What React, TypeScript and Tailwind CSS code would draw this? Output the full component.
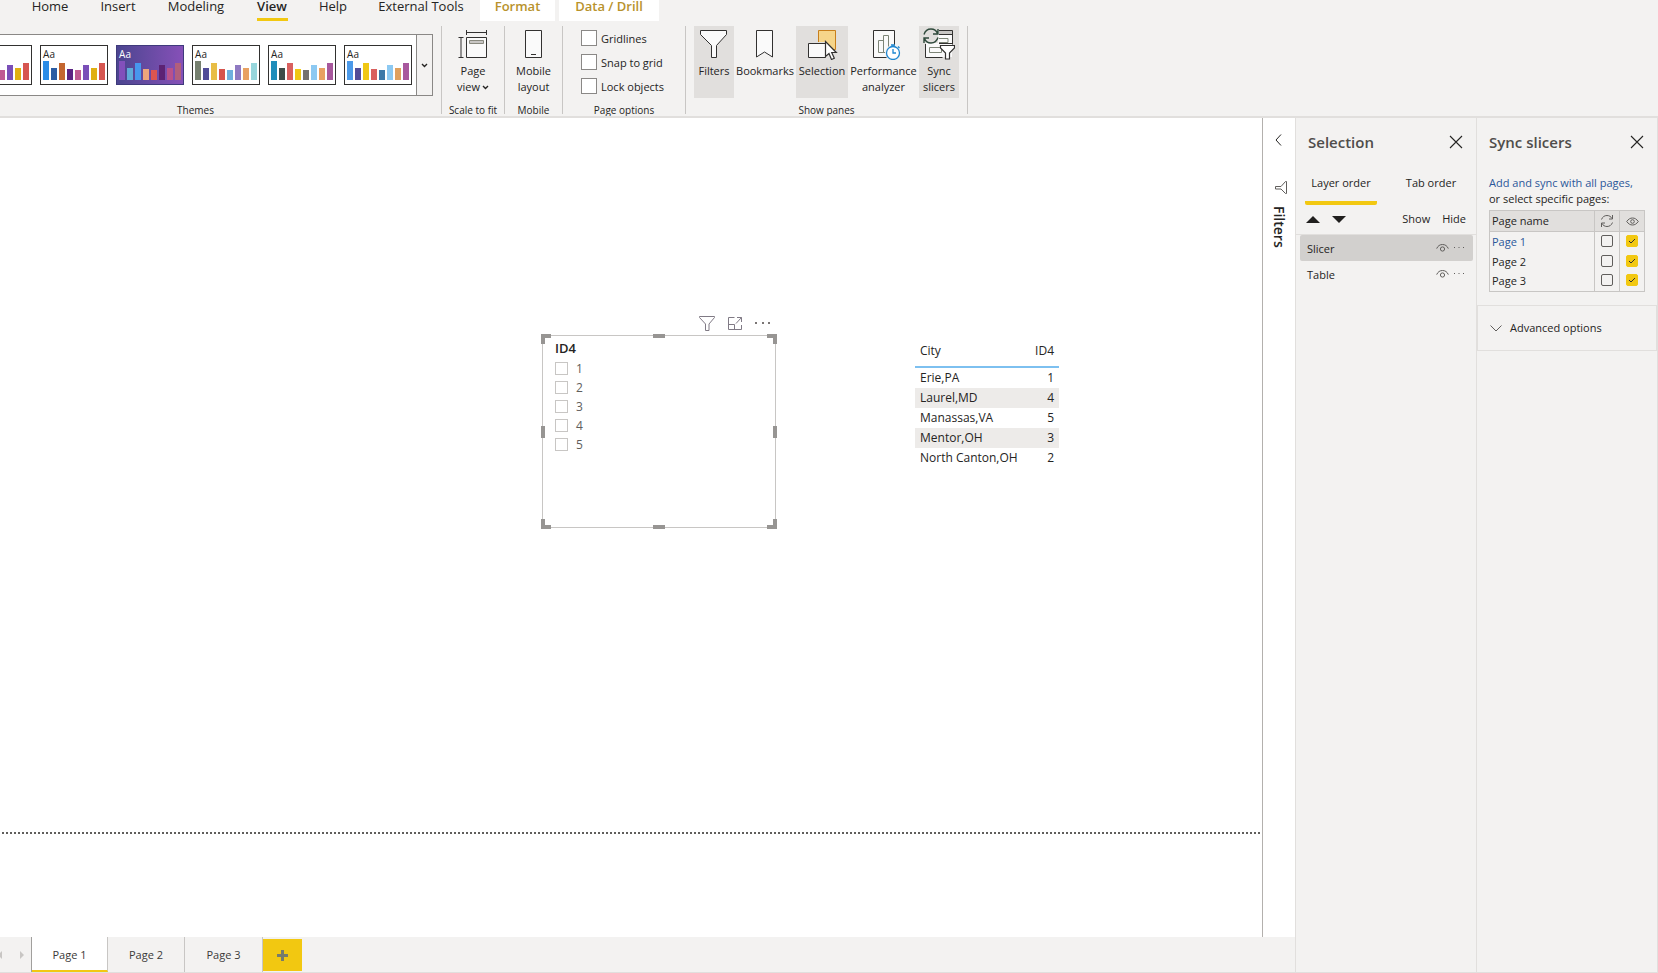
import { useState } from "react";
import type { ReactNode } from "react";
import clsx from "clsx";

const tabs = [
  { name: "Home", size: "w-[68px]" },
  { name: "Insert", size: "w-[68px]" },
  { name: "Modeling", size: "w-[88px]" },
  { name: "View", size: "w-16", active: true },
  { name: "Help", size: "w-[58px]" },
  { name: "External Tools", size: "w-[118px]" },
];

const themes = [
  { id: "t1", colors: ["#2b8ce6", "#2b5ca3", "#c4662f", "#5c2483", "#bf5a92", "#7a4fb8", "#e0b012", "#d65650"] },
  { id: "t2", colors: ["#2b8ce6", "#2b5ca3", "#c4662f", "#5c2483", "#bf5a92", "#7a4fb8", "#e0b012", "#d65650"] },
  { id: "t3", dark: true, colors: ["#8250bb", "#5fabd9", "#4797ee", "#eda57c", "#dc5550", "#5c2274", "#b9518a", "#b15f7c"] },
  { id: "t4", colors: ["#76806f", "#514c98", "#e8bd45", "#d6544d", "#6fb0de", "#8f7ac2", "#e8a162", "#97d6dc"] },
  { id: "t5", colors: ["#1f8dba", "#3e4c48", "#d9605f", "#f0c713", "#757170", "#8cc9f2", "#e8a162", "#a8589d"] },
  { id: "t6", colors: ["#4b9aea", "#514c98", "#f0c713", "#d9605f", "#3c78a8", "#8cc9f2", "#dfa05e", "#a8589d"] },
];

const barHeights = [19, 12, 17, 11, 10, 15, 12, 17];

const cities = [
  { city: "Erie,PA", id: 1 },
  { city: "Laurel,MD", id: 4 },
  { city: "Manassas,VA", id: 5 },
  { city: "Mentor,OH", id: 3 },
  { city: "North Canton,OH", id: 2 },
];

/* ---------- icons ---------- */

const CloseIcon = () => (
  <svg width="14" height="14" viewBox="0 0 14 14" fill="none" stroke="#252423" strokeWidth="1.1">
    <path d="M1 1l12 12M13 1L1 13" />
  </svg>
);

const EyeIcon = () => (
  <svg width="13" height="10" viewBox="0 0 13 10" fill="none" stroke="#605e5c">
    <path d="M.7 5.6C1.8 2.8 4 1.5 6.5 1.5s4.700 1.300 5.800 4.100" />
    <circle cx="6.500" cy="6" r="2.100" />
  </svg>
);

const DotsIcon = () => (
  <svg width="12" height="4" viewBox="0 0 12 4" fill="#605e5c">
    <path d="M1 1h1v1H1zM5.500 1h1v1h-1zM10 1h1v1h-1z" />
  </svg>
);

const Chevron = () => (
  <svg width="7" height="5" viewBox="0 0 7 5" fill="none" stroke="#252423" strokeWidth="1.4">
    <path d="M1 1l2.500 2.500L6 1" />
  </svg>
);

const PageViewIcon = () => (
  <svg width="30" height="28" viewBox="0 0 30 28" fill="none" stroke="#323130">
    <path d="M8.500 0v5M28.500 0v5M8.500 2.500h20M.5 7.500h5M.5 27.500h5M3 7.500v20" />
    <path d="M8.500 7.500h20v20h-20z" fill="#fafafa" />
    <path d="M11.500 10.500h14v3h-14z" fill="#c8c6c4" stroke="#8a8a80" />
  </svg>
);

const MobileIcon = () => (
  <svg width="18" height="28" viewBox="0 0 18 28" fill="none" stroke="#323130">
    <path d="M.5.5h16v27H.5z" fill="#fafafa" />
    <path d="M6 24.500h5" />
  </svg>
);

const FilterIcon = () => (
  <svg width="28" height="28" viewBox="0 0 28 28" fill="#fafafa" stroke="#323130">
    <path d="M.5.5h26v4L16.500 15.500v12h-5v-12L.5 4.500z" />
  </svg>
);

const BookmarkIcon = () => (
  <svg width="18" height="28" viewBox="0 0 18 28" fill="#fafafa" stroke="#323130">
    <path d="M.5.5h16v26.500l-8-5-8 5z" />
  </svg>
);

const SelectionIcon = () => (
  <svg width="32" height="30" viewBox="-2 0 32 30">
    <path d="M10.500.5h17v19h-17z" fill="#f6d58a" stroke="#c87f1c" />
    <path d="M0 12h18v16H0z" fill="#e1dfdd" />
    <path d="M.5 13.500h17v14H.5z" fill="#fafafa" stroke="#323130" />
    <path d="M17.500 11.500v15l3.500-3 2.500 6 2.800-1.200-2.600-5.800h4.600z" fill="#fff" stroke="#323130" strokeWidth="1.2" />
  </svg>
);

const PerformanceIcon = () => (
  <svg width="34" height="30" viewBox="-6 0 34 30" fill="none">
    <path d="M.5.5h21v27H.5z" fill="#fafafa" stroke="#323130" />
    <path d="M5.500 10.500h5v12h-5zM10.500 5.500h5v17h-5z" stroke="#7d8577" />
    <circle cx="20" cy="23" r="8" fill="#f3f2f1" />
    <circle cx="20" cy="23" r="6.500" fill="#fff" stroke="#1e86d0" strokeWidth="1.300" />
    <path d="M20 19v4h3M18 15h4M20 15v2M25 16.500l1.500 1.500" stroke="#1e86d0" strokeWidth="1.300" />
  </svg>
);

const SyncIcon = () => (
  <svg className="-mt-0.5" width="32" height="32" viewBox="0 0 32 32" fill="none">
    <path d="M3 15h26v14H3zM15 3h14v12H15z" fill="#fafafa" />
    <path d="M16 3h13v3H16z" fill="#c8c6c4" />
    <path d="M16 2.500h13.500v14M16 6.500h13M2.500 16v13.500h17M16 15.500h13" stroke="#323130" />
    <path d="M16 10.500h9v4h-9M6.500 19.500h12v5h-12z" stroke="#7d8577" />
    <path
      d="M1 6.500C2.200 2.800 4.700 1 8 1c3.200 0 5.500 1.800 6.500 4.500M15 1v5h-5M15 9.500c-1.200 3.700-3.700 5.500-7 5.500-3.200 0-5.500-1.800-6.500-4.500M1 15v-5h5"
      stroke="#2f4a3c"
      strokeWidth="1.400"
    />
    <path d="M17.500 17.500h14v2.500l-5 5v6h-4v-6l-5-5z" fill="#fff" stroke="#323130" strokeWidth="1.200" />
  </svg>
);

const RefreshIcon = () => (
  <svg width="14" height="14" viewBox="0 0 14 14" fill="none" stroke="#605e5c">
    <path d="M1.500 5.500C2.500 2.800 4.500 1.500 7 1.500c2.300 0 4 1.200 5 3M12.500 1v4H9M12.500 8.500c-1 2.700-3 4-5.500 4-2.300 0-4-1.200-5-3M1.500 13V9H5" />
  </svg>
);

/* ---------- small parts ---------- */

const Group = ({ label, className, children }: { label: string; className?: string; children: ReactNode }) => (
  <section className={clsx("flex h-[88px] shrink-0 flex-col border-r border-[#c8c6c4]", className)}>
    <div className="flex flex-1">{children}</div>
    <div className="h-2.5 text-center text-[10px] leading-3">{label}</div>
  </section>
);

const RibbonButton = ({ icon, size, active, children }: { icon: ReactNode; size: string; active?: boolean; children: ReactNode }) => (
  <button
    className={clsx(
      "flex h-[72px] shrink-0 flex-col items-center whitespace-nowrap pt-1 text-[11px] leading-4",
      size,
      active && "bg-[#e1dfdd]"
    )}
  >
    <span className="flex h-[33px] items-start">{icon}</span>
    {children}
  </button>
);

const Theme = ({ colors, dark }: { colors: string[]; dark?: boolean }) => (
  <button
    aria-label="Theme"
    className={clsx(
      "flex h-10 w-[68px] shrink-0 flex-col items-start justify-between border px-0.5 pb-1 pt-0.5",
      dark ? "border-[#3f3a7c] bg-linear-to-r from-[#4b4590] to-[#8650b8] text-white" : "border-[#323130] bg-white"
    )}
  >
    <span className="text-[10px] leading-3 tracking-wide">Aa</span>
    <span className="flex items-end gap-0.5">
      {colors.map((color, i) => (
        <span key={i} className="w-1.5" style={{ height: barHeights[i], background: color }} />
      ))}
    </span>
  </button>
);

const PageCheck = ({ label, defaultChecked }: { label: string; defaultChecked?: boolean }) => (
  <span className="relative mx-auto mb-0.5 block size-3">
    <input
      type="checkbox"
      aria-label={label}
      defaultChecked={defaultChecked}
      className="peer block size-3 appearance-none rounded-xs border border-[#605e5c] checked:border-[#f2c811] checked:bg-[#f2c811]"
    />
    <svg
      className="pointer-events-none absolute inset-0 hidden peer-checked:block"
      viewBox="0 0 12 12"
      fill="none"
      stroke="#323130"
    >
      <path d="M3 6l2 2 4-4" />
    </svg>
  </span>
);

/* ---------- ribbon ---------- */

const Ribbon = () => (
  <header className="overflow-hidden border-b-2 border-[#e1dfdd]">
    <nav className="flex h-[21px] pl-4 text-[13px] leading-[13px]">
      {tabs.map((tab) => (
        <button key={tab.name} className={clsx("relative flex shrink-0 justify-center", tab.size, tab.active && "font-semibold")}>
          {tab.name}
          {tab.active && <span className="absolute bottom-0 h-[3px] w-[31px] bg-[#f2c811]" />}
        </button>
      ))}
      <button className="flex w-[75px] shrink-0 justify-center bg-white font-semibold text-[#b8922c]">Format</button>
      <button className="ml-1 flex w-[100px] shrink-0 justify-center bg-white font-semibold text-[#b8922c]">Data / Drill</button>
    </nav>

    <div className="flex pb-0.5 pt-[5px]">
      {/* Themes */}
      <Group label="Themes" className="w-[442px] pr-[50px]">
        <div className="mt-2 flex h-[62px] w-[433px] shrink-0 border border-l-0 border-[#8a8886] bg-white">
          <div className="flex flex-1 items-center justify-end gap-2 overflow-hidden pr-1">
            {themes.map((t) => (
              <Theme key={t.id} colors={t.colors} dark={t.dark} />
            ))}
          </div>
          <button aria-label="More themes" className="flex w-4 items-center justify-center border-l border-[#8a8886] bg-[#f3f2f1]">
            <Chevron />
          </button>
        </div>
      </Group>

      <Group label="Scale to fit" className="w-[63px]">
        <RibbonButton size="w-full" icon={<PageViewIcon />}>
          <span>Page</span>
          <span className="flex items-center gap-0.5">
            view <Chevron />
          </span>
        </RibbonButton>
      </Group>

      <Group label="Mobile" className="w-[58px]">
        <RibbonButton size="w-full" icon={<MobileIcon />}>
          <span>Mobile</span>
          <span>layout</span>
        </RibbonButton>
      </Group>

      <Group label="Page options" className="w-[123px]">
        <div className="flex flex-col gap-2 pl-[18px] pt-1">
          {["Gridlines", "Snap to grid", "Lock objects"].map((option) => (
            <label key={option} className="flex h-4 items-center gap-1 text-[11px] leading-4">
              <input type="checkbox" className="size-4 appearance-none border border-[#8a8886] bg-white checked:bg-[#f2c811]" />
              <span className="pt-0.5">{option}</span>
            </label>
          ))}
        </div>
      </Group>

      <Group label="Show panes" className="w-[282px]">
        <div className="flex pl-2">
          <RibbonButton size="w-10" active icon={<FilterIcon />}>Filters</RibbonButton>
          <RibbonButton size="w-[62px]" icon={<BookmarkIcon />}>Bookmarks</RibbonButton>
          <RibbonButton size="w-[52px]" active icon={<SelectionIcon />}>Selection</RibbonButton>
          <RibbonButton size="w-[71px]" icon={<PerformanceIcon />}>
            <span>Performance</span>
            <span>analyzer</span>
          </RibbonButton>
          <RibbonButton size="w-10" active icon={<SyncIcon />}>
            <span>Sync</span>
            <span>slicers</span>
          </RibbonButton>
        </div>
      </Group>
    </div>
  </header>
);

/* ---------- canvas visuals ---------- */

const Slicer = () => (
  <div className="absolute left-[542px] top-[217px] h-[193px] w-[234px] border border-[#c8c6c4] pl-3 pt-1">
    {/* visual header */}
    <div className="absolute -top-5 right-0 flex items-center gap-3 pr-1">
      <button aria-label="Filters on visual">
        <svg width="17" height="15" viewBox="0 0 17 15" fill="none" stroke="#807a85">
          <path d="M.5.500h15v1L10 8v6.500H6.500V8L.5 1.500z" />
        </svg>
      </button>
      <button aria-label="Focus mode">
        <svg width="15" height="13" viewBox="0 0 15 13" fill="none" stroke="#807a85">
          <path d="M6.500.5h-6v12h13V8M.5 7.500h6v5M9 .5h4.500V5M13.500.5L8 6.500" />
        </svg>
      </button>
      <button aria-label="More options">
        <svg width="16" height="3" viewBox="0 0 16 3" fill="#7a7574">
          <path d="M0 0h2v2H0zM7 0h2v2H7zM13 0h2v2h-2z" />
        </svg>
      </button>
    </div>

    {/* resize handles */}
    <span className="absolute -left-0.5 -top-0.5 size-2.5 border-l-4 border-t-4 border-[#979593]" />
    <span className="absolute -right-0.5 -top-0.5 size-2.5 border-r-4 border-t-4 border-[#979593]" />
    <span className="absolute -bottom-0.5 -left-0.5 size-2.5 border-b-4 border-l-4 border-[#979593]" />
    <span className="absolute -bottom-0.5 -right-0.5 size-2.5 border-b-4 border-r-4 border-[#979593]" />
    <span className="absolute -top-0.5 left-[110px] h-1 w-3 bg-[#979593]" />
    <span className="absolute -bottom-0.5 left-[110px] h-1 w-3 bg-[#979593]" />
    <span className="absolute -left-0.5 top-[90px] h-3 w-1 bg-[#979593]" />
    <span className="absolute -right-0.5 top-[90px] h-3 w-1 bg-[#979593]" />

    <h3 className="pb-[3px] text-[13px] font-semibold leading-4">ID4</h3>
    {[1, 2, 3, 4, 5].map((n) => (
      <label key={n} className="flex h-[19px] items-center gap-2 text-[12px] text-[#605e5c]">
        <input type="checkbox" className="size-[13px] appearance-none border border-[#c8c6c4] bg-white checked:bg-[#605e5c]" />
        {n}
      </label>
    ))}
  </div>
);

const CityTable = () => (
  <table className="absolute left-[915px] top-[215px] w-36 text-[12px] leading-5">
    <thead>
      <tr className="h-[34px] border-b-2 border-[#7dc0f0]">
        <th className="px-[5px] pt-0.5 text-left font-normal">City</th>
        <th className="px-[5px] pt-0.5 text-right font-normal">ID4</th>
      </tr>
    </thead>
    <tbody>
      {cities.map((row) => (
        <tr key={row.city} className="h-5 even:bg-[#edebe9]">
          <td className="whitespace-nowrap px-[5px]">{row.city}</td>
          <td className="px-[5px] text-right">{row.id}</td>
        </tr>
      ))}
    </tbody>
  </table>
);

const FiltersRail = () => (
  <aside className="flex w-8 shrink-0 flex-col items-center bg-white pt-4">
    <button aria-label="Expand filters" className="mr-0.5">
      <svg width="7" height="12" viewBox="0 0 7 12" fill="none" stroke="#252423">
        <path d="M6 .500L1 6l5 5.500" />
      </svg>
    </button>
    <svg className="ml-1 mt-[35px]" width="12" height="13" viewBox="0 0 12 13" fill="none" stroke="#605e5c">
      <path d="M11.500.5v12h-1L6 8H.5V5.500H6L10.500.5z" />
    </svg>
    <h2 className="mt-3 text-[14px] font-semibold leading-4 [writing-mode:vertical-rl]">Filters</h2>
  </aside>
);

/* ---------- side panes ---------- */

const PaneTitle = ({ title }: { title: string }) => (
  <div className="flex h-12 items-center justify-between pl-3 pr-[13px]">
    <h2 className="text-[15px] font-semibold text-[#4f4d4b]">{title}</h2>
    <button aria-label={"Close " + title}>
      <CloseIcon />
    </button>
  </div>
);

const SelectionPane = () => {
  const [selected, setSelected] = useState("Slicer");

  return (
    <aside className="flex w-[181px] shrink-0 flex-col border-l border-[#e1dfdd]">
      <PaneTitle title="Selection" />
      <div className="mt-0.5 flex text-[11px]">
        <button className="ml-[9px] h-[37px] w-[72px] whitespace-nowrap rounded-b-xs border-b-4 border-[#f2c811] pb-0.5 font-medium">Layer order</button>
        <button className="ml-[18px] h-[37px] w-[72px] whitespace-nowrap pb-1.5">Tab order</button>
      </div>
      <div className="flex h-[30px] items-center border-b border-[#e1dfdd] px-2.5 text-[11px]">
        <button aria-label="Move up">
          <svg width="14" height="7" viewBox="0 0 14 7" fill="#201f1e">
            <path d="M0 7l7-7 7 7z" />
          </svg>
        </button>
        <button aria-label="Move down" className="ml-3">
          <svg width="14" height="7" viewBox="0 0 14 7" fill="#201f1e">
            <path d="M0 0l7 7 7-7z" />
          </svg>
        </button>
        <button className="ml-auto">Show</button>
        <button className="ml-3">Hide</button>
      </div>
      <ul className="pl-1 pr-[3px]">
        {["Slicer", "Table"].map((item) => (
          <li
            key={item}
            onClick={() => setSelected(item)}
            className={clsx(
              "flex h-[26px] items-center rounded-xs pl-[7px] pr-2 text-[11px] leading-4",
              selected === item && "bg-[#d2d0ce]"
            )}
          >
            <span className="pt-0.5">{item}</span>
            <button aria-label={"Hide " + item} className="ml-auto">
              <EyeIcon />
            </button>
            <button aria-label={"More options for " + item} className="ml-1">
              <DotsIcon />
            </button>
          </li>
        ))}
      </ul>
    </aside>
  );
};

const SyncPane = () => (
  <aside className="flex w-[182px] shrink-0 flex-col border-x border-[#e1dfdd]">
    <PaneTitle title="Sync slicers" />
    <p className="whitespace-nowrap pl-3 pt-[9px] text-[11px] leading-4">
      <a href="#" className="text-[#2b579a]">Add and sync with all pages,</a>
      <br />
      or select specific pages:
    </p>
    <table className="ml-3 mt-[3px] w-[156px] table-fixed border border-[#c8c6c4] text-[11px] leading-4">
      <thead>
        <tr className="h-[21px] border-b border-[#c8c6c4] bg-[#e1dfdd]">
          <th className="pl-0.5 text-left font-normal">Page name</th>
          <th className="w-[25px] border-l border-[#c8c6c4]">
            <span className="flex justify-center"><RefreshIcon /></span>
          </th>
          <th className="w-[25px] border-l border-[#c8c6c4]">
            <span className="flex justify-center">
              <svg width="13" height="9" viewBox="0 0 13 9" fill="none" stroke="#605e5c">
                <path d="M.7 4.500C2.500 2 4.300 1 6.500 1s4 1 5.800 3.500C10.500 7 8.700 8 6.500 8S2.500 7 .7 4.500z" />
                <circle cx="6.500" cy="4.500" r="1.800" />
              </svg>
            </span>
          </th>
        </tr>
      </thead>
      <tbody>
        {["Page 1", "Page 2", "Page 3"].map((page, i) => (
          <tr key={page} className="h-5">
            <td className={clsx("pl-0.5", i === 0 && "text-[#2b579a]")}>{page}</td>
            <td className="border-l border-[#c8c6c4]"><PageCheck label={"Sync " + page} /></td>
            <td className="border-l border-[#c8c6c4]"><PageCheck label={"Show on " + page} defaultChecked /></td>
          </tr>
        ))}
      </tbody>
    </table>
    <button className="mt-[13px] flex h-[46px] items-center gap-2 border border-[#e1dfdd] pl-3 text-[11px]">
      <svg width="12" height="7" viewBox="0 0 12 7" fill="none" stroke="#605e5c">
        <path d="M.5.5L6 6 11.500.5" />
      </svg>
      Advanced options
    </button>
  </aside>
);

/* ---------- page tabs ---------- */

const PageTabs = () => (
  <nav className="flex h-[35px] shrink-0 text-[11px] text-[#3b3a39]">
    <div className="flex w-8 items-center justify-between border-r border-[#a19f9d] pr-[7px]">
      <svg width="2" height="8" viewBox="0 0 2 8" fill="#c8c6c4">
        <path d="M0 2l2-2v8L0 6z" />
      </svg>
      <svg width="4" height="8" viewBox="0 0 4 8" fill="#c8c6c4">
        <path d="M0 0l4 4-4 4z" />
      </svg>
    </div>
    <button className="w-[76px] border-b-2 border-r border-b-[#f2c811] border-r-[#c8c6c4] bg-white pt-[3px]">Page 1</button>
    <button className="w-[77px] border-r border-[#c8c6c4] pt-px">Page 2</button>
    <button className="w-[78px] border-r border-[#c8c6c4] pt-px">Page 3</button>
    <button aria-label="New page" className="mt-0.5 flex h-8 w-[39px] items-center justify-center bg-[#f2c811]">
      <svg width="11" height="11" viewBox="0 0 11 11" fill="#767b6c">
        <path d="M4 0h3v4h4v3H7v4H4V7H0V4h4z" />
      </svg>
    </button>
  </nav>
);

const App = () => {
  return (
    <div className="flex min-h-screen flex-col border-b border-[#e1dfdd] bg-[#f3f2f1] font-['Open_Sans',sans-serif] text-[#252423]">
      <Ribbon />
      <div className="flex flex-1">
        <div className="flex min-w-0 flex-1 flex-col">
          <div className="flex flex-1">
            <main className="relative flex min-w-0 flex-1 flex-col justify-end overflow-hidden border-r border-[#b3b0ad] bg-white">
              <Slicer />
              <CityTable />
              {/* page boundary */}
              <div className="mx-0.5 mb-[103px] h-0.5 bg-[repeating-linear-gradient(90deg,#605e5c_0_2px,transparent_2px_4px)]" />
            </main>
            <FiltersRail />
          </div>
          <PageTabs />
        </div>
        <SelectionPane />
        <SyncPane />
      </div>
    </div>
  );
};

export default App;
